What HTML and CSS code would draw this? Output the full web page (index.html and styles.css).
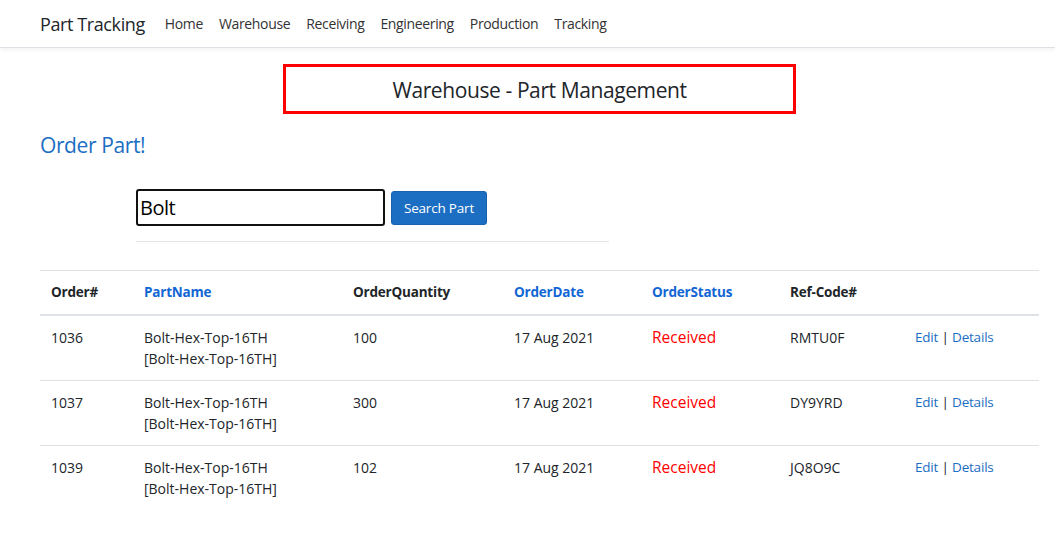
FILE: index.html
```html
<!DOCTYPE html>
<html>
<head>
<meta charset="utf-8">
<title>Part Tracking</title>
<link rel="stylesheet" href="styles.css">
</head>
<body>
<header class="navbar">
  <div class="nav-inner">
    <a class="brand" href="#">Part Tracking</a>
    <nav class="nav-links">
      <a href="#">Home</a>
      <a href="#">Warehouse</a>
      <a href="#">Receiving</a>
      <a href="#">Engineering</a>
      <a href="#">Production</a>
      <a href="#">Tracking</a>
    </nav>
  </div>
</header>
<main class="container">
  <div class="title-wrap">
    <h1 class="title-box">Warehouse - Part Management</h1>
  </div>
  <h2 class="order-link">Order Part!</h2>
  <form class="search">
    <div class="search-row">
      <input class="search-input" type="text" value="Bolt">
      <button class="btn" type="button">Search Part</button>
    </div>
    <hr class="search-rule">
  </form>
  <table class="grid">
    <colgroup>
      <col class="c1"><col class="c2"><col class="c3"><col class="c4"><col class="c5"><col class="c6"><col class="c7">
    </colgroup>
    <thead>
      <tr>
        <th>Order#</th>
        <th><a href="#">PartName</a></th>
        <th>OrderQuantity</th>
        <th><a href="#">OrderDate</a></th>
        <th><a href="#">OrderStatus</a></th>
        <th>Ref-Code#</th>
        <th></th>
      </tr>
    </thead>
    <tbody>
      <tr>
        <td>1036</td>
        <td>Bolt-Hex-Top-16TH<br>[Bolt-Hex-Top-16TH]</td>
        <td>100</td>
        <td>17 Aug 2021</td>
        <td><span class="status">Received</span></td>
        <td>RMTU0F</td>
        <td class="actions"><a href="#">Edit</a> | <a href="#">Details</a></td>
      </tr>
      <tr>
        <td>1037</td>
        <td>Bolt-Hex-Top-16TH<br>[Bolt-Hex-Top-16TH]</td>
        <td>300</td>
        <td>17 Aug 2021</td>
        <td><span class="status">Received</span></td>
        <td>DY9YRD</td>
        <td class="actions"><a href="#">Edit</a> | <a href="#">Details</a></td>
      </tr>
      <tr>
        <td>1039</td>
        <td>Bolt-Hex-Top-16TH<br>[Bolt-Hex-Top-16TH]</td>
        <td>102</td>
        <td>17 Aug 2021</td>
        <td><span class="status">Received</span></td>
        <td>JQ8O9C</td>
        <td class="actions"><a href="#">Edit</a> | <a href="#">Details</a></td>
      </tr>
    </tbody>
  </table>
</main>
</body>
</html>
```
FILE: styles.css
```css
* { box-sizing: border-box; }
body {
  margin: 0;
  font-family: "Open Sans", "Noto Sans", sans-serif;
  font-size: 14px;
  color: #212529;
  background: #fff;
}
a { text-decoration: none; }

.navbar {
  height: 48px;
  border-bottom: 1px solid #dde1e6;
  box-shadow: 0 2px 4px rgba(0,0,0,0.05);
}
.nav-inner {
  display: flex;
  align-items: center;
  height: 100%;
  padding-left: 40px;
}
.brand {
  font-size: 18px;
  color: #212529;
  margin-right: 20px;
  letter-spacing: -0.4px;
}
.nav-links { display: flex; gap: 16px; }
.nav-links a {
  color: #333;
  font-size: 14px;
  letter-spacing: -0.35px;
}

.container {
  margin: 0 16px 0 40px;
}
.title-wrap {
  display: flex;
  justify-content: center;
  padding-top: 16px;
}
.title-box {
  margin: 0;
  width: 513px;
  height: 50px;
  border: 3px solid #ff0000;
  font-size: 21px;
  font-weight: 400;
  text-align: center;
  line-height: 46px;
  color: #212529;
  letter-spacing: -0.4px;
}
.order-link {
  margin: 17px 0 0 0;
  font-size: 21px;
  font-weight: 400;
  color: #1b6ec2;
  line-height: 28px;
  letter-spacing: -0.4px;
}
.search {
  margin: 30px 0 0 96px;
  width: 473px;
}
.search-row {
  display: flex;
  align-items: center;
  gap: 6px;
}
.search-input {
  width: 249px;
  height: 37px;
  border: 2px solid #111;
  border-radius: 3px;
  font-family: inherit;
  font-size: 20px;
  padding: 0 2px;
  color: #000;
  outline: none;
  letter-spacing: -0.5px;
}
.btn {
  height: 34px;
  width: 96px;
  border: 1px solid #1861ac;
  border-radius: 3px;
  background: #1b6ec2;
  color: #fff;
  font-family: inherit;
  font-size: 13.5px;
  letter-spacing: -0.2px;
  padding: 0;
}
.search-rule {
  margin: 15px 0 0 0;
  border: 0;
  border-top: 1px solid #e5e5e5;
}

.grid {
  margin-top: 28px;
  width: 999px;
  border-collapse: collapse;
  table-layout: fixed;
}
.c1 { width: 93px; }
.c2 { width: 209px; }
.c3 { width: 161px; }
.c4 { width: 138px; }
.c5 { width: 138px; }
.c6 { width: 125px; }
.c7 { width: 135px; }
.grid th, .grid td {
  text-align: left;
  vertical-align: top;
  padding: 11px 11px;
  line-height: 21px;
  border-top: 1px solid #dee2e6;
  font-size: 14px;
}
.grid th {
  font-weight: 700;
  color: #212529;
  font-size: 13.5px;
  letter-spacing: -0.2px;
  border-bottom: 2px solid #dee2e6;
}
.grid th a { color: #1266d4; }
.grid tbody tr:first-child td { border-top: 0; }
.grid td.actions {
  font-size: 13.5px;
  letter-spacing: -0.2px;
}
.grid td a { color: #1b6ec2; }
.status {
  color: #ff0000;
  font-size: 15.5px;
}
```
